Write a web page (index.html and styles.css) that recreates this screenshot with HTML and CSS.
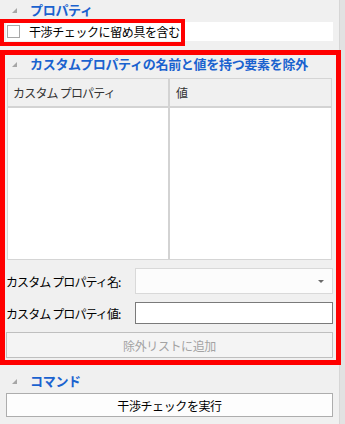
FILE: index.html
```html
<!DOCTYPE html>
<html lang="ja">
<head>
<meta charset="utf-8">
<link rel="stylesheet" href="styles.css">
</head>
<body>
<div class="window">
  <div class="panel">
    <div class="section-head">
      <span class="caret"></span>
      <span class="title">プロパティ</span>
    </div>
    <div class="check-row">
      <span class="checkbox"></span>
      <span class="check-label">干渉チェックに留め具を含む</span>
    </div>

    <div class="section-head head2">
      <span class="caret"></span>
      <span class="title">カスタムプロパティの名前と値を持つ要素を除外</span>
    </div>
    <div class="grid">
      <div class="grid-head">
        <div class="col col1">カスタム プロパティ</div>
        <div class="col col2">値</div>
      </div>
      <div class="grid-body">
        <div class="body-col1"></div>
        <div class="body-col2"></div>
      </div>
    </div>
    <div class="form-row row-combo">
      <span class="label">カスタム プロパティ名:</span>
      <div class="combo"><span class="arrow"></span></div>
    </div>
    <div class="form-row row-input">
      <span class="label">カスタム プロパティ値:</span>
      <div class="textbox"></div>
    </div>
    <div class="btn btn-disabled">除外リストに追加</div>

    <div class="section-head head3">
      <span class="caret"></span>
      <span class="title">コマンド</span>
    </div>
    <div class="btn btn-run">干渉チェックを実行</div>

    <div class="mark mark1"></div>
    <div class="mark mark2"></div>
  </div>
  <div class="scrollstrip"></div>
</div>
</body>
</html>
```

FILE: styles.css
```css
* { box-sizing: border-box; }
html, body {
  margin: 0;
  padding: 0;
  background: #f0f0f0;
  font-family: "Noto Sans CJK JP", "Noto Sans", sans-serif;
  font-size: 12px;
  color: #000;
}
.window {
  display: flex;
  width: 345px;
  height: 424px;
  overflow: hidden;
}
.panel {
  position: relative;
  width: 339px;
  padding: 0 6px 0 6px;
  display: flex;
  flex-direction: column;
}
.scrollstrip {
  width: 6px;
  background: #e2e2e2;
  border-left: 1px solid #d6d6d6;
}
.section-head {
  height: 20px;
  display: flex;
  align-items: center;
  padding-left: 6px;
}
.caret {
  width: 0;
  height: 0;
  border-left: 5px solid transparent;
  border-bottom: 5px solid #a6a6a6;
  margin-right: 13px;
  margin-top: 1px;
}
.title {
  color: #1a62cf;
  font-weight: bold;
  font-size: 13px;
  letter-spacing: -0.3px;
  line-height: 20px;
}
.check-row {
  margin-top: 2px;
  height: 19px;
  background: #fff;
  display: flex;
  align-items: center;
  padding-left: 1px;
}
.checkbox {
  width: 13px;
  height: 13px;
  border: 1px solid #a8a8a8;
  background: #fff;
  margin-right: 9px;
}
.check-label {
  letter-spacing: -0.4px;
  line-height: 19px;
}
.head2 { margin-top: 13px; }
.grid {
  margin-top: 4px;
  margin-left: 1px;
  width: 325px;
  height: 182px;
  border: 1px solid #d5d5d5;
  display: flex;
  flex-direction: column;
  background: #fff;
}
.grid-head {
  height: 29px;
  display: flex;
  background: #f0f0f0;
  border-bottom: 2px solid #d3d3d3;
}
.col {
  display: flex;
  align-items: center;
  color: #333;
  letter-spacing: -0.8px;
  padding-left: 5px;
}
.col1 {
  width: 162px;
  border-right: 2px solid #d3d3d3;
}
.col2 { flex: 1; padding-left: 6px; }
.grid-body {
  flex: 1;
  display: flex;
}
.body-col1 {
  width: 162px;
  border-right: 2px solid #d3d3d3;
}
.body-col2 { flex: 1; }
.form-row {
  display: flex;
  align-items: center;
  margin-top: 8px;
}
.row-combo { height: 26px; }
.row-input { height: 22px; }
.label {
  width: 129px;
  letter-spacing: -0.9px;
  white-space: nowrap;
}
.combo {
  width: 198px;
  height: 26px;
  border: 1px solid #d9d9d9;
  background: #fcfcfc;
  position: relative;
}
.arrow {
  position: absolute;
  right: 8px;
  top: 11px;
  width: 0;
  height: 0;
  border-left: 3px solid transparent;
  border-right: 3px solid transparent;
  border-top: 3px solid #6a6a6a;
}
.textbox {
  width: 198px;
  height: 22px;
  border: 1px solid #7a7a7a;
  background: #fff;
}
.btn {
  display: flex;
  align-items: center;
  justify-content: center;
  width: 327px;
  letter-spacing: -0.4px;
}
.btn-disabled {
  margin-top: 8px;
  height: 26px;
  border: 1px solid #bfbfbf;
  background: #f4f4f4;
  color: #a3a3a3;
}
.head3 { margin-top: 13px; }
.btn-run {
  margin-top: 2px;
  height: 24px;
  border: 1px solid #adadad;
  background: #fdfdfd;
  color: #000;
}
.mark {
  position: absolute;
  border: 4px solid #ff0000;
  pointer-events: none;
}
.mark1 {
  left: 0;
  top: 19px;
  width: 185px;
  height: 27px;
}
.mark2 {
  left: 0;
  top: 50px;
  width: 341px;
  height: 315px;
  border-width: 5px;
}
```
